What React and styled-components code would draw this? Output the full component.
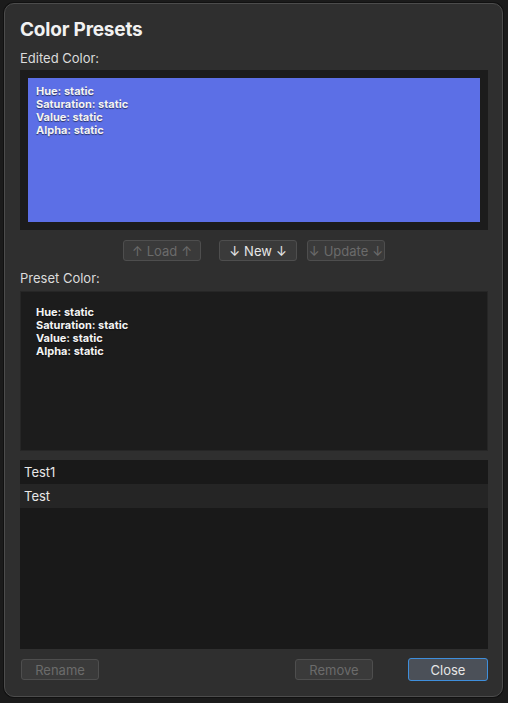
import React from 'react'
import styled, { createGlobalStyle } from 'styled-components'

const Global = createGlobalStyle`
  html, body {
    margin: 0;
    padding: 0;
    background: #1b1b1b;
    font-family: Inter, "Liberation Sans", sans-serif;
    -webkit-font-smoothing: antialiased;
  }
`

const Screen = styled.div`
  width: 508px;
  height: 703px;
  padding: 3px 0 0 4px;
  box-sizing: border-box;
`

const Dialog = styled.div`
  width: 499px;
  height: 694px;
  box-sizing: border-box;
  background: #2f2f2f;
  border: 1px solid #4c4c4c;
  border-radius: 10px;
  box-shadow: 0 0 0 1px #111;
  padding: 14px 14px 0 15px;
  display: flex;
  flex-direction: column;
  color: #e4e4e4;
`

const Title = styled.h1`
  margin: 0;
  font-size: 19px;
  line-height: 24px;
  font-weight: 700;
  color: #f2f2f2;
  letter-spacing: -0.2px;
`

const Label = styled.div`
  font-size: 13px;
  line-height: 16px;
  color: #dcdcdc;
  margin-top: ${p => p.$top}px;
`

const Frame = styled.div`
  margin-top: 4px;
  height: 160px;
  box-sizing: border-box;
  background: #1c1c1c;
  padding: 8px;
`

const Swatch = styled.div`
  height: 100%;
  background: ${p => p.$color};
  padding: 7px 8px;
  box-sizing: border-box;
`

const Stats = styled.div`
  font-size: 11px;
  line-height: 13px;
  font-weight: 700;
  color: #f4f4f4;
  text-shadow: 0 1px 1px rgba(0, 0, 0, 0.55);
`

const ButtonRow = styled.div`
  display: flex;
  gap: 10px;
  padding-left: 103px;
  margin-top: 10px;
`

const Button = styled.button`
  width: ${p => p.$w || 78}px;
  height: ${p => p.$h || 21}px;
  margin-left: ${p => p.$gap || 0}px;
  box-sizing: border-box;
  padding: 0;
  font-family: inherit;
  font-size: 13px;
  background: ${p => (p.$primary ? '#4b5058' : '#3a3a3a')};
  border: 1px solid ${p => (p.$primary ? '#3f8fdc' : '#4e4e4e')};
  border-radius: 3px;
  color: ${p => (p.disabled ? '#6b6b6b' : '#e6e6e6')};
  display: flex;
  align-items: center;
  justify-content: center;
  gap: 4px;
`

const PresetBox = styled.div`
  margin-top: 5px;
  height: 160px;
  box-sizing: border-box;
  background: #1c1c1c;
  border: 1px solid #262626;
  padding: 14px 15px;
`

const List = styled.div`
  margin-top: 9px;
  height: 189px;
  background: #191919;
`

const ListRow = styled.div`
  height: 24px;
  display: flex;
  align-items: center;
  padding-left: 4px;
  font-size: 13px;
  color: #e8e8e8;
  background: ${p => (p.$alt ? '#252525' : '#191919')};
`

const Footer = styled.div`
  margin-top: 9px;
  display: flex;
  align-items: center;
`

const Spacer = styled.div`
  flex: 1;
`

const Arrow = ({ up }) => <span>{up ? '↑' : '↓'}</span>

const StatsText = () => (
  <Stats>
    <div>Hue: static</div>
    <div>Saturation: static</div>
    <div>Value: static</div>
    <div>Alpha: static</div>
  </Stats>
)

export default function App() {
  return (
    <Screen>
      <Global />
      <Dialog>
        <Title>Color Presets</Title>
        <Label $top={8}>Edited Color:</Label>
        <Frame>
          <Swatch $color="#5c6fe6">
            <StatsText />
          </Swatch>
        </Frame>

        <ButtonRow>
          <Button disabled>
            <Arrow up /> Load <Arrow up />
          </Button>
          <Button $gap={8}>
            <Arrow /> New <Arrow />
          </Button>
          <Button disabled>
            <Arrow /> Update <Arrow />
          </Button>
        </ButtonRow>

        <Label $top={9}>Preset Color:</Label>
        <PresetBox>
          <StatsText />
        </PresetBox>

        <List>
          <ListRow>Test1</ListRow>
          <ListRow $alt>Test</ListRow>
        </List>

        <Footer>
          <Button disabled style={{ marginLeft: 1 }}>Rename</Button>
          <Spacer />
          <Button disabled>Remove</Button>
          <Button $primary $w={80} $h={23} $gap={35}>Close</Button>
        </Footer>
      </Dialog>
    </Screen>
  )
}
